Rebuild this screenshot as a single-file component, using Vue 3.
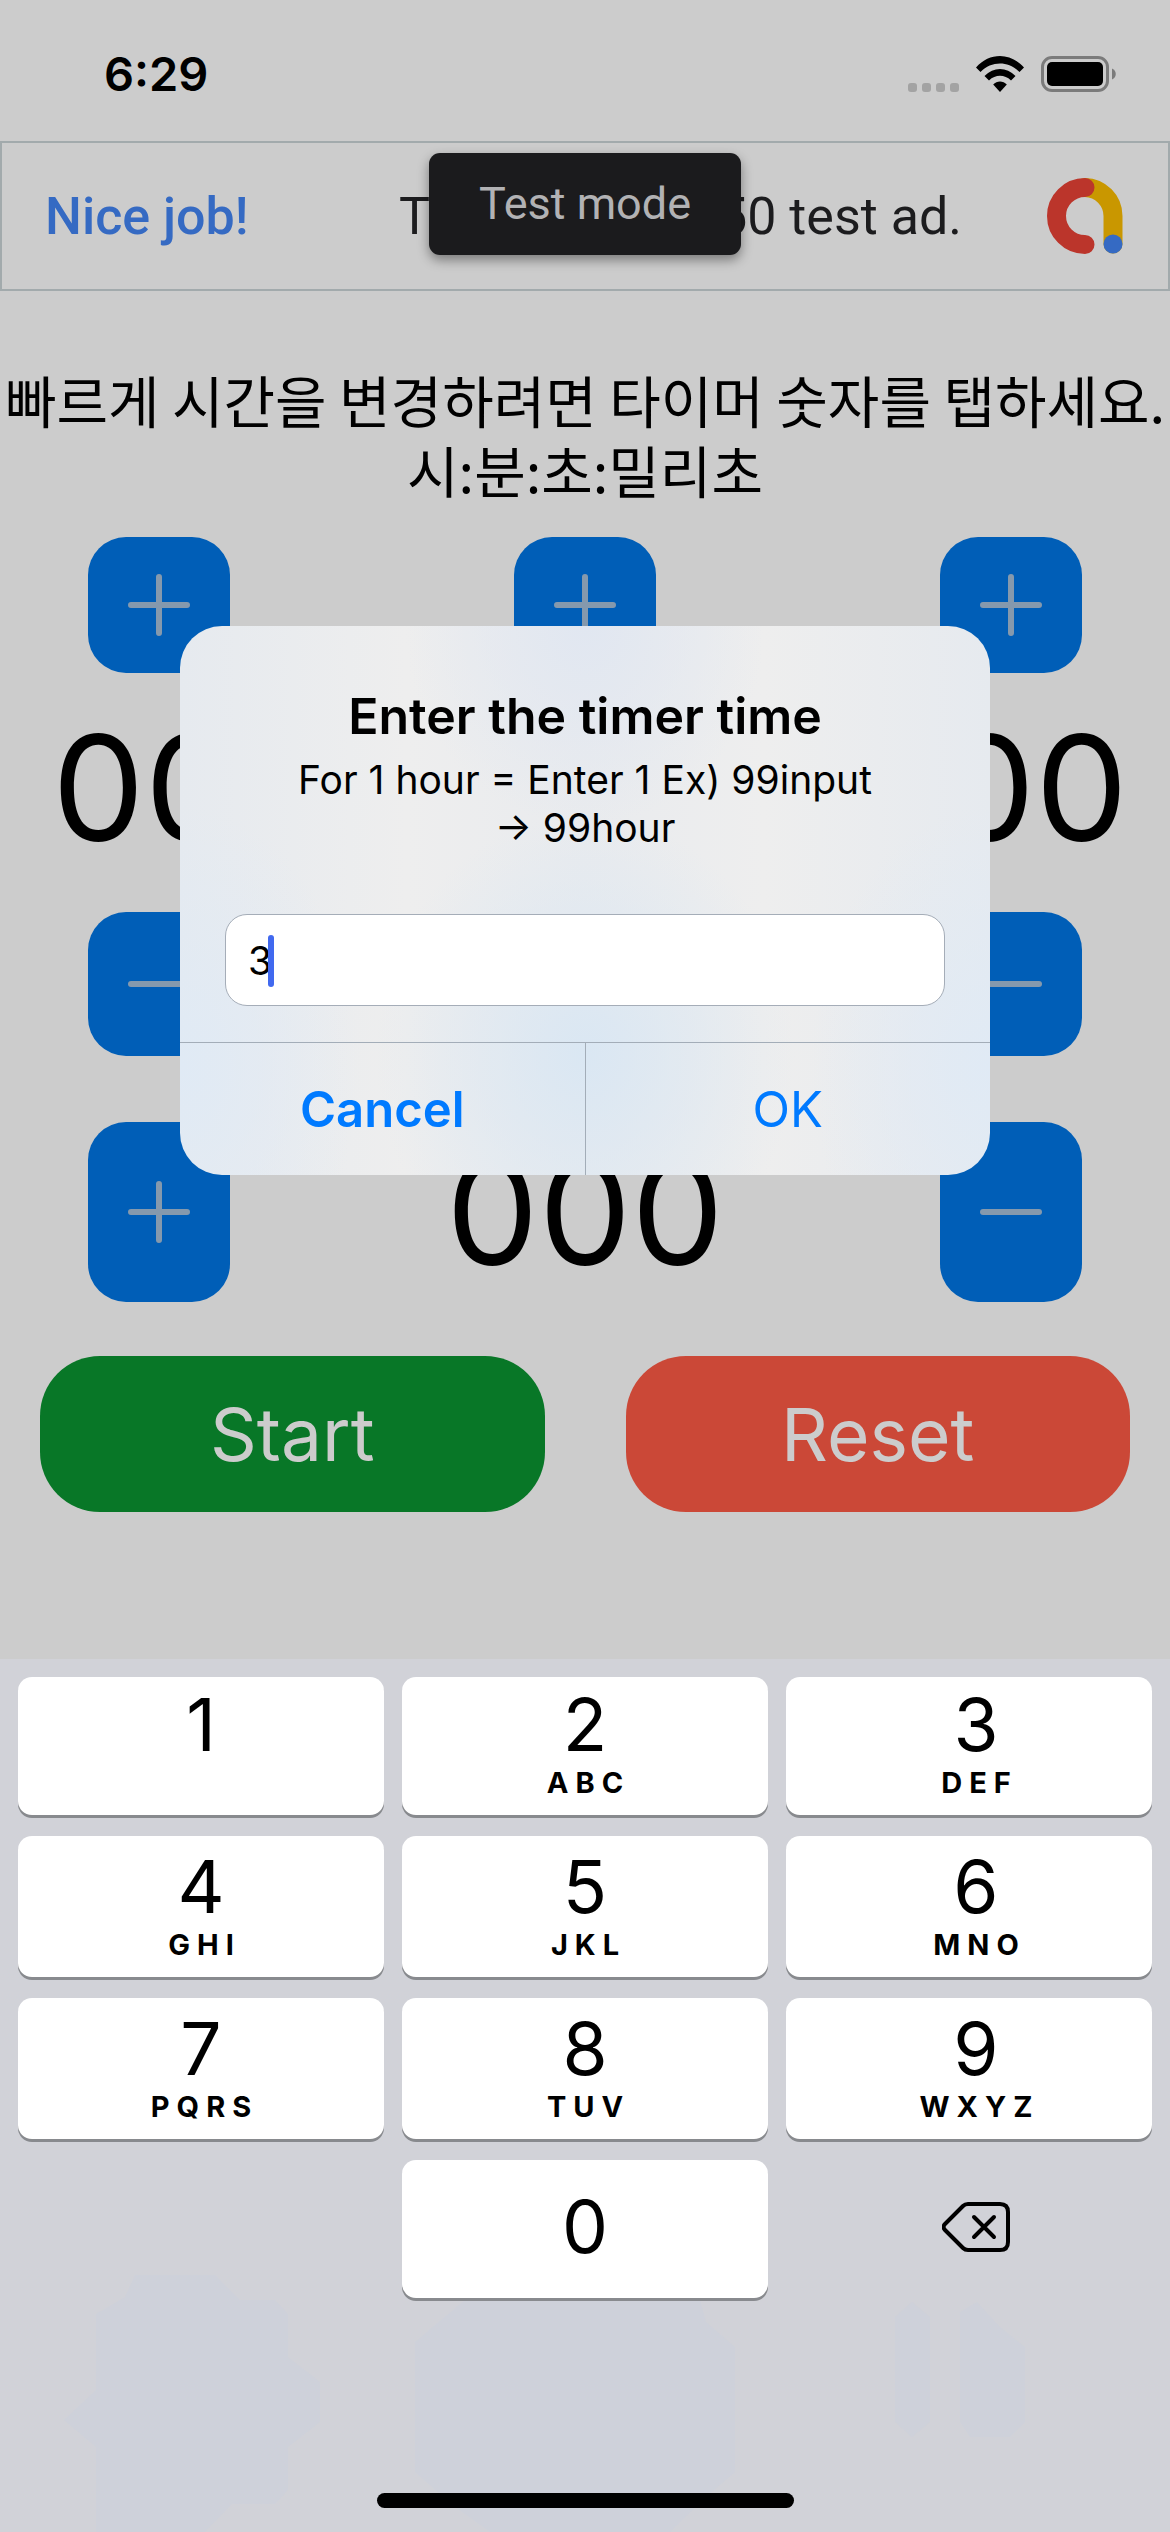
<script setup>
import { ref } from 'vue'

const entry = ref('3')

const keyRows = [
  [['1', ''], ['2', 'ABC'], ['3', 'DEF']],
  [['4', 'GHI'], ['5', 'JKL'], ['6', 'MNO']],
  [['7', 'PQRS'], ['8', 'TUV'], ['9', 'WXYZ']],
]

function press(digit) {
  entry.value += digit
}

function erase() {
  entry.value = entry.value.slice(0, -1)
}
</script>

<template>
  <div class="screen">
    <header class="status">
      <time class="clock">6:29</time>
      <div class="indicators">
        <span class="cell"><i></i><i></i><i></i><i></i></span>
        <svg class="wifi" viewBox="0 0 48 36" width="48" height="36" aria-hidden="true">
          <path d="M0 11.5C13.500-3.800 34.500-3.800 48 11.500L43.500 16C32.500 4.700 15.500 4.700 4.500 16Z" />
          <path d="M8.500 20C17.500 10.700 30.500 10.700 39.500 20L35 24.500C28.500 18.300 19.500 18.300 13 24.500Z" />
          <path d="M17.200 28.500C21 24.500 27 24.500 30.800 28.500L24 36Z" />
        </svg>
        <svg class="battery" viewBox="0 0 75 36" width="75" height="36" aria-hidden="true">
          <rect x="1.500" y="1.500" width="65" height="33" rx="9.500" fill="none" stroke="#7b7b7b" stroke-width="3" />
          <rect x="6" y="6" width="56" height="24" rx="5" />
          <path d="M71 12.500C76 14.500 76 21.500 71 23.500Z" fill="#7b7b7b" />
        </svg>
      </div>
    </header>

    <section class="banner">
      <strong class="praise">Nice job!</strong>
      <span class="ad-text">This is a 320x50 test ad.</span>
      <svg class="ad-logo" viewBox="0 0 76 76" width="76" height="76" aria-hidden="true">
        <g fill="none" stroke-width="19" stroke-linecap="round">
          <path d="M38 9.500A28.500 28.500 0 0 1 66 38V66" stroke="#c99700" />
          <path d="M38 9.500A28.500 28.500 0 0 0 38 66.500" stroke="#bb352b" />
        </g>
        <circle cx="66" cy="66" r="9.500" fill="#356ac3" />
      </svg>
      <span class="toast">Test mode</span>
    </section>

    <main class="timer">
      <p class="hint">빠르게 시간을 변경하려면 타이머 숫자를 탭하세요.<br />시:분:초:밀리초</p>

      <div class="steps">
        <button v-for="n in 3" :key="n" class="step short" aria-label="Increase">
          <svg viewBox="0 0 62 62" width="62" height="62"><path d="M3 31H59M31 3V59" /></svg>
        </button>
      </div>
      <div class="values">
        <span>00</span><span>00</span><span>00</span>
      </div>
      <div class="steps">
        <button v-for="n in 3" :key="n" class="step" aria-label="Decrease">
          <svg viewBox="0 0 62 62" width="62" height="62"><path d="M3 31H59" /></svg>
        </button>
      </div>
      <div class="steps millis">
        <button class="step tall" aria-label="Increase milliseconds">
          <svg viewBox="0 0 62 62" width="62" height="62"><path d="M3 31H59M31 3V59" /></svg>
        </button>
        <span class="ms-value">000</span>
        <button class="step tall" aria-label="Decrease milliseconds">
          <svg viewBox="0 0 62 62" width="62" height="62"><path d="M3 31H59" /></svg>
        </button>
      </div>
      <div class="actions">
        <button class="action start">Start</button>
        <button class="action reset">Reset</button>
      </div>
    </main>

    <section class="keyboard">
      <svg class="tint" viewBox="0 0 1170 260" aria-hidden="true">
        <path d="M135 3H215L240 28H275L288 42V85L320 110V150L288 175V218L275 232H232L205 260H96V175L64 148L96 118V42L125 25Z" />
        <path d="M465 28H700L706 50L735 75V200L706 225L670 260H490L455 235L415 200V70Z" />
        <path d="M895 45L912 30L930 45V150L912 165L895 150Z" />
        <path d="M960 40L977 30L1000 55L1025 75V150L1010 165H970L960 150Z" />
      </svg>
      <div v-for="(row, i) in keyRows" :key="i" class="key-row" :class="{ first: i === 0 }">
        <button v-for="[digit, letters] in row" :key="digit" class="key" @click="press(digit)">
          <span class="digit">{{ digit }}</span>
          <span class="letters">{{ letters }}</span>
        </button>
      </div>
      <div class="key-row last">
        <span class="blank"></span>
        <button class="key zero" @click="press('0')"><span class="digit">0</span></button>
        <button class="erase" aria-label="Delete" @click="erase">
          <svg viewBox="0 0 68 50" width="68" height="50">
            <path d="M26 2H58Q66 2 66 10V40Q66 48 58 48H26Q23 48 21 46L3 28Q0 25 3 22L21 4Q23 2 26 2Z" />
            <path d="M32 15L52 35M52 15L32 35" />
          </svg>
        </button>
      </div>
      <div class="home-bar"></div>
    </section>

    <form class="dialog" role="dialog" aria-labelledby="dialog-title" @submit.prevent>
      <h1 id="dialog-title">Enter the timer time</h1>
      <p><label for="hours">For 1 hour = Enter 1 Ex) 99input<br />→ 99hour</label></p>
      <div class="field">
        <input id="hours" v-model="entry" type="text" inputmode="numeric" />
        <span class="caret"></span>
      </div>
      <div class="choices">
        <button type="button" class="cancel">Cancel</button>
        <button type="submit">OK</button>
      </div>
    </form>
  </div>
</template>

<style>
body {
  margin: 0;
  background: #cccccc;
}
</style>

<style scoped>
.screen {
  position: relative;
  display: flex;
  flex-direction: column;
  min-height: 100vh;
  overflow: hidden;
  background: #cccccc;
  color: #000;
  font-family: Inter, "Noto Sans CJK KR", sans-serif;
}

button {
  margin: 0;
  padding: 0;
  border: 0;
  background: none;
  color: inherit;
  font: inherit;
}

.status {
  display: flex;
  justify-content: space-between;
  align-items: center;
  box-sizing: border-box;
  height: 141px;
  padding: 6px 54px 0 104px;
}

.clock {
  font-size: 47px;
  font-weight: 600;
  line-height: 60px;
}

.indicators {
  display: flex;
  align-items: center;
  gap: 17px;
}

.cell {
  display: flex;
  align-self: flex-end;
  gap: 5px;
}

.cell i {
  width: 9px;
  height: 9px;
  border-radius: 3px;
  background: #a3a3a3;
}

.banner {
  position: relative;
  display: flex;
  align-items: center;
  box-sizing: border-box;
  height: 150px;
  padding: 0 45px 0 43px;
  border: 2px solid #a2aaac;
  font-family: Roboto, sans-serif;
}

.praise {
  color: #356ac3;
  font-size: 52px;
  font-weight: 500;
}

.ad-text {
  margin-left: auto;
  color: #1c1c1e;
  font-size: 52px;
}

.ad-logo {
  margin-left: 85px;
}

.toast {
  position: absolute;
  top: 10px;
  left: 50%;
  width: 312px;
  margin-left: -156px;
  border-radius: 11px;
  background: #1b1b1d;
  box-shadow: 0 5px 12px rgba(0, 0, 0, 0.4);
  color: #b2b2b4;
  font-size: 45px;
  line-height: 102px;
  text-align: center;
}

.timer {
  padding-top: 73px;
}

.hint {
  margin: 0 0 33px;
  font-family: "Noto Sans CJK KR", sans-serif;
  font-size: 56px;
  line-height: 70px;
  text-align: center;
  white-space: nowrap;
}

.steps {
  display: flex;
  justify-content: space-between;
  padding: 0 88px;
}

.step {
  display: flex;
  justify-content: center;
  align-items: center;
  width: 142px;
  height: 144px;
  border-radius: 38px;
  background: #005eb7;
}

.step.short {
  height: 136px;
}

.step.tall {
  height: 180px;
}

.step svg {
  fill: none;
  stroke: #8599ad;
  stroke-width: 6;
  stroke-linecap: round;
}

.values {
  display: flex;
  justify-content: space-between;
  margin-bottom: 10px;
  padding: 0 42px 0 52px;
  font-size: 147px;
  line-height: 229px;
}

.millis {
  align-items: center;
  margin-top: 66px;
}

.ms-value {
  font-size: 147px;
  line-height: 176px;
}

.actions {
  display: flex;
  gap: 81px;
  margin-top: 54px;
  padding: 0 40px;
}

.action {
  flex: 1;
  height: 156px;
  border-radius: 60px;
  color: #cccccc;
  font-size: 73px;
}

.start {
  background: #087727;
}

.reset {
  background: #cb4837;
}

.keyboard {
  position: relative;
  display: flex;
  flex-direction: column;
  gap: 21px;
  margin-top: auto;
  padding: 18px 18px 24px;
  background: #d1d2d8;
}

.tint {
  position: absolute;
  bottom: 0;
  left: 0;
  width: 100%;
  fill: #ced1da;
}

.key-row {
  position: relative;
  display: grid;
  grid-template-columns: repeat(3, 1fr);
  gap: 18px;
  height: 141px;
}

.key-row.first,
.key-row.last {
  height: 138px;
}

.key {
  display: flex;
  flex-direction: column;
  justify-content: flex-end;
  align-items: center;
  box-sizing: border-box;
  padding-bottom: 14px;
  border-radius: 14px;
  background: #fff;
  box-shadow: 0 3px 0 #888a8e;
}

.key:nth-child(3),
.erase {
  padding-left: 14px;
}

.digit {
  margin-bottom: 4px;
  font-size: 73px;
  line-height: 72px;
}

.letters {
  height: 36px;
  margin-right: -7px;
  font-size: 29px;
  font-weight: 700;
  letter-spacing: 7px;
  line-height: 36px;
}

.key.zero {
  justify-content: center;
  padding: 0;
}

.erase {
  display: flex;
  justify-content: center;
  align-items: center;
  padding-bottom: 4px;
}

.erase svg {
  fill: none;
  stroke: #000;
  stroke-width: 4;
  stroke-linecap: round;
  stroke-linejoin: round;
}

.home-bar {
  position: relative;
  align-self: center;
  width: 417px;
  height: 15px;
  margin-top: 174px;
  border-radius: 8px;
  background: #000;
}

.dialog {
  position: absolute;
  top: 626px;
  left: 50%;
  width: 810px;
  margin-left: -405px;
  overflow: hidden;
  border-radius: 42px;
  background:
    radial-gradient(ellipse 210px 240px at 50% 78%, #dae7f3, rgba(218, 231, 243, 0)),
    radial-gradient(ellipse 180px 200px at 50% 0, #e1e7f1, rgba(225, 231, 241, 0)),
    radial-gradient(ellipse 180px 260px at 0 80%, #e0eaf5, rgba(224, 234, 245, 0)),
    radial-gradient(ellipse 180px 260px at 100% 80%, #e0eaf5, rgba(224, 234, 245, 0)),
    linear-gradient(90deg, #e6eaef, #eeeeee 28%, #e9ebee 50%, #eeeeee 72%, #e6eaef);
  text-align: center;
}

h1 {
  margin: 0;
  padding-top: 60px;
  font-size: 50px;
  font-weight: 600;
  line-height: 60px;
}

.dialog p {
  margin: 10px 0 0;
  font-size: 39px;
  line-height: 48px;
}

.field {
  position: relative;
  margin: 62px 45px 36px;
}

.field input {
  display: block;
  box-sizing: border-box;
  width: 100%;
  height: 92px;
  padding: 0 22px;
  border: 1px solid #a5adb8;
  border-radius: 22px;
  outline: 0;
  background: #fff;
  color: #000;
  font-family: Inter, sans-serif;
  font-size: 39px;
}

.caret {
  position: absolute;
  top: 21px;
  left: 43px;
  width: 6px;
  height: 52px;
  border-radius: 3px;
  background: #4169ef;
}

.choices {
  display: flex;
  border-top: 1px solid #a3adb8;
}

.choices button {
  flex: 1;
  height: 132px;
  color: #007aff;
  font-size: 49px;
}

.choices .cancel {
  border-right: 1px solid #a3adb8;
  font-weight: 600;
}
</style>
